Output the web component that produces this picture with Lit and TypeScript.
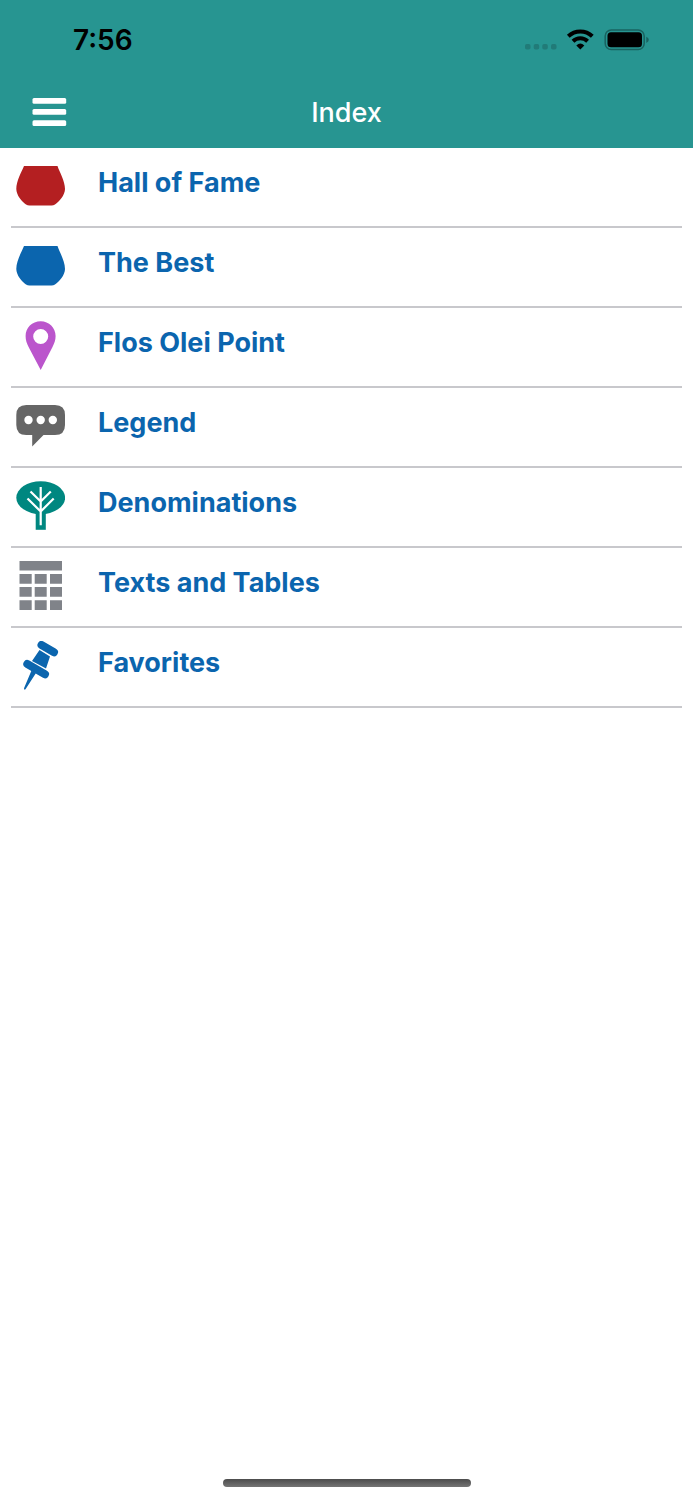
import { LitElement, html, css, svg, type SVGTemplateResult } from "lit";
import { customElement } from "lit/decorators.js";

interface Entry {
  label: string;
  icon: SVGTemplateResult;
}

const bowl = (color: string) => svg`
  <path fill=${color} d="M8 5H41.500C43.500 11 49 20 49 28C49 34 43 41 39 43.500Q37.500 44.500 35.500 44.500H13.500Q11.500 44.500 10 43.500C6 41 0.300 34 0.300 28C0.300 20 5.500 11 8 5Z"/>`;

const entries: Entry[] = [
  { label: "Hall of Fame", icon: bowl("#b41f21") },
  { label: "The Best", icon: bowl("#0b65ae") },
  {
    label: "Flos Olei Point",
    icon: svg`<path fill="#bb55cc" fill-rule="evenodd" d="M24.700 0.300C33 0.300 39.600 7 39.600 15C39.600 19 38.300 22.500 36.500 26L24.700 49L12.600 26C10.800 22.500 9.600 19 9.600 15C9.600 7 16 0.300 24.700 0.300ZM24.700 8A7.500 7.500 0 1 0 24.700 23A7.500 7.500 0 1 0 24.700 8Z"/>`,
  },
  {
    label: "Legend",
    icon: svg`
      <path fill="#666" d="M10.300 4H39Q49 4 49 14V24Q49 34 39 34H27.500L16.200 45.500V34H10.300Q0.300 34 0.300 24V14Q0.300 4 10.300 4Z"/>
      <g fill="#fff"><circle cx="12.500" cy="19" r="4.200"/><circle cx="24.700" cy="19" r="4.200"/><circle cx="36.800" cy="19" r="4.200"/></g>`,
  },
  {
    label: "Denominations",
    icon: svg`
      <ellipse cx="24.700" cy="16.700" rx="24.400" ry="16.500" fill="#008780"/>
      <path fill="#008780" d="M19.700 30H29.800V48.800H19.700Z"/>
      <path fill="none" stroke="#fff" stroke-width="2.200" d="M24.700 6V44.300M14.500 10.500L24.700 20.500L34.800 10.500M11.500 17.500L24.700 30.500L37.700 17.500"/>`,
  },
  {
    label: "Texts and Tables",
    icon: svg`<path fill="#808389" d="M3.500 0H46V9.500H3.500ZM3.500 13H15.700V22.700H3.500ZM18.700 13H30.700V22.700H18.700ZM34 13H46V22.700H34ZM3.500 26H15.700V35.700H3.500ZM18.700 26H30.700V35.700H18.700ZM34 26H46V35.700H34ZM3.500 39.200H15.700V49H3.500ZM18.700 39.200H30.700V49H18.700ZM34 39.200H46V49H34Z"/>`,
  },
  {
    label: "Favorites",
    icon: svg`
      <g stroke="#0b65ae" stroke-width="8" stroke-linecap="round">
        <path d="M25.500 4L38 11.200M11.300 23L29 33.200"/>
      </g>
      <path fill="#0b65ae" d="M23.500 9L34 15.500L30 27.500L16 20ZM15.500 29.500L20 32L9.500 48.300Q8 49.300 8 47.300Z"/>`,
  },
];

@customElement("app-root")
export class AppRoot extends LitElement {
  static styles = css`
    :host {
      display: flex;
      flex-direction: column;
      min-height: 100vh;
      background: #fff;
      font-family: Inter, "Liberation Sans", sans-serif;
      font-size: 27px;
      line-height: 36px;
    }
    .header {
      background: #279591;
    }
    .status {
      display: flex;
      align-items: center;
      justify-content: space-between;
      height: 76px;
      padding: 4px 44px 0 73px;
      box-sizing: border-box;
      font-size: 28px;
      font-weight: 600;
      color: #000;
    }
    .signals {
      display: block;
      width: 124px;
      height: 24px;
    }
    .bar {
      display: grid;
      grid-template-columns: 1fr auto 1fr;
      align-items: center;
      height: 72px;
      padding: 0 32px;
    }
    .menu {
      justify-self: start;
      padding: 0;
      border: 0;
      background: none;
      cursor: pointer;
    }
    .menu svg {
      display: block;
      width: 35px;
      height: 28px;
    }
    .title {
      margin: 0;
      padding-top: 2px;
      font-size: 27px;
      font-weight: 500;
      color: #fff;
    }
    .list {
      margin: 0;
      padding: 0 11px;
      list-style: none;
    }
    .item {
      border-bottom: 2px solid #c8c8cc;
    }
    .link {
      display: flex;
      align-items: flex-start;
      gap: 33px;
      padding: 13px 5px 16px;
      color: #0b65ae;
      font-weight: 700;
      text-decoration: none;
    }
    .icon {
      flex: none;
      width: 49px;
      height: 49px;
    }
    .label {
      padding-top: 4px;
    }
    .home {
      width: 248px;
      height: 8px;
      margin: auto auto 13px;
      border-radius: 4px;
      background: linear-gradient(#4c4c4c, #747474);
    }
  `;

  render() {
    return html`
      <header class="header">
        <div class="status">
          <span>7:56</span>
          <svg class="signals" viewBox="0 0 124 24" role="img" aria-label="Wi-Fi connected, battery full">
            <g fill="#217b78">
              <rect x="0" y="16" width="5.500" height="5.500" rx="1.800"/>
              <rect x="8.700" y="16" width="5.500" height="5.500" rx="1.800"/>
              <rect x="17.300" y="16" width="5.500" height="5.500" rx="1.800"/>
              <rect x="26" y="16" width="5.500" height="5.500" rx="1.800"/>
            </g>
            <g fill="none" stroke="#000" stroke-width="4">
              <path d="M43.300 8.300A17.300 17.300 0 0 1 67.300 8.300"/>
              <path d="M48 13.200A10.500 10.500 0 0 1 62.600 13.200"/>
            </g>
            <path d="M55.300 21.500L51.300 17.500Q55.300 13.500 59.300 17.500Z"/>
            <rect x="80.200" y="2" width="39" height="19.500" rx="6" fill="none" stroke="#196360" stroke-width="1.500"/>
            <rect x="82.500" y="4.300" width="34.500" height="15" rx="3.500"/>
            <path fill="#196360" d="M121.300 8.700Q123.800 9.700 123.800 11.800T121.300 14.900Z"/>
          </svg>
        </div>
        <div class="bar">
          <button class="menu" type="button" aria-label="Menu">
            <svg viewBox="0 0 35 28" fill="#fff" aria-hidden="true">
              <rect x="0.500" width="33.700" height="5.800" rx="1.500"/>
              <rect x="0.500" y="11" width="33.700" height="5.800" rx="1.500"/>
              <rect x="0.500" y="22.200" width="33.700" height="5.800" rx="1.500"/>
            </svg>
          </button>
          <h1 class="title">Index</h1>
        </div>
      </header>
      <nav aria-label="Index">
        <ul class="list">
          ${entries.map(
            (entry) => html`
              <li class="item">
                <a class="link" href="#">
                  <svg class="icon" viewBox="0 0 49 49" aria-hidden="true">${entry.icon}</svg>
                  <span class="label">${entry.label}</span>
                </a>
              </li>
            `
          )}
        </ul>
      </nav>
      <div class="home"></div>
    `;
  }
}
